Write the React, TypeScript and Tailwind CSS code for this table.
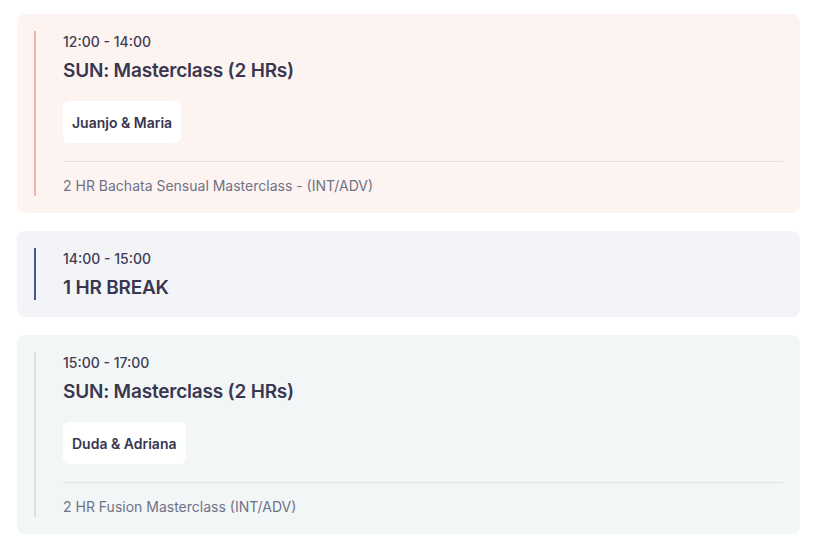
type Session = {
  time: string;
  title: string;
  hosts?: string;
  description?: string;
  tone: 'class' | 'break' | 'fusion';
};

const sessions: Session[] = [
  {
    time: '12:00 - 14:00',
    title: 'SUN: Masterclass (2 HRs)',
    hosts: 'Juanjo & Maria',
    description: '2 HR Bachata Sensual Masterclass - (INT/ADV)',
    tone: 'class',
  },
  { time: '14:00 - 15:00', title: '1 HR BREAK', tone: 'break' },
  {
    time: '15:00 - 17:00',
    title: 'SUN: Masterclass (2 HRs)',
    hosts: 'Duda & Adriana',
    description: '2 HR Fusion Masterclass (INT/ADV)',
    tone: 'fusion',
  },
];

const cardTone = {
  class: 'bg-[#fdf4f2]',
  break: 'bg-[#f3f4f8]',
  fusion: 'bg-[#f3f6f6]',
};

const barTone = {
  class: 'bg-[#efb6aa]',
  break: 'bg-[#44578f]',
  fusion: 'bg-[#d3e2dc]',
};

function SessionCard({ session }: { session: Session }) {
  return (
    <article className={`rounded-lg p-[17px] ${cardTone[session.tone]}`}>
      <div className="flex gap-[27px]">
        <div className={`w-[2px] shrink-0 ${barTone[session.tone]}`} />
        <div className="min-w-0 flex-1">
          <p className="pt-px text-[14px] leading-5 font-medium text-[#3f3c55]">{session.time}</p>
          <h3 className="mt-[7px] text-[19px] leading-6 font-semibold tracking-[-0.2px] text-[#39364f]">
            {session.title}
          </h3>
          {session.hosts && (
            <div className="mt-[18px] inline-flex h-[42px] items-center rounded-md bg-white px-[9px]">
              <span className="text-[14px] font-semibold text-[#39364f]">{session.hosts}</span>
            </div>
          )}
          {session.description && (
            <>
              <div className="mt-[18px] h-px bg-[#e4e2e4]" />
              <p className="mt-[14px] text-[14px] leading-5 text-[#6f7287]">{session.description}</p>
            </>
          )}
        </div>
      </div>
    </article>
  );
}

export default function App() {
  return (
    <div
      className="min-h-screen bg-white pl-[17px] pr-[25px] pt-[14px]"
      style={{ fontFamily: 'Inter, "Noto Sans", sans-serif' }}
    >
      <div className="flex flex-col gap-[18px]">
        {sessions.map((session) => (
          <SessionCard key={session.time} session={session} />
        ))}
      </div>
    </div>
  );
}
